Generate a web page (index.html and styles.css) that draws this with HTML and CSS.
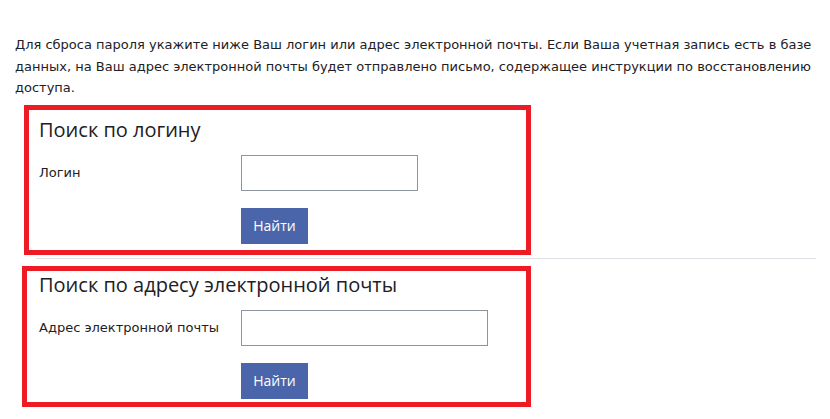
FILE: index.html
```html
<!DOCTYPE html>
<html lang="ru">
<head>
<meta charset="utf-8">
<title>Восстановление пароля</title>
<link rel="stylesheet" href="styles.css">
</head>
<body>
<div class="page">
  <p class="intro">Для сброса пароля укажите ниже Ваш логин или адрес электронной почты. Если Ваша учетная запись есть в базе данных, на Ваш адрес электронной почты будет отправлено письмо, содержащее инструкции по восстановлению доступа.</p>

  <form class="search search-login">
    <h3 class="search-title">Поиск по логину</h3>
    <div class="row">
      <label class="label" for="username">Логин</label>
      <input class="field field-short" id="username" type="text">
    </div>
    <div class="row">
      <span class="label"></span>
      <button class="btn" type="button">Найти</button>
    </div>
  </form>

  <div class="divider"></div>

  <form class="search search-email">
    <h3 class="search-title">Поиск по адресу электронной почты</h3>
    <div class="row">
      <label class="label" for="email">Адрес электронной почты</label>
      <input class="field field-long" id="email" type="text">
    </div>
    <div class="row">
      <span class="label"></span>
      <button class="btn" type="button">Найти</button>
    </div>
  </form>
</div>
</body>
</html>
```

FILE: styles.css
```css
html, body {
  margin: 0;
  padding: 0;
  background: #ffffff;
}

body {
  font-family: "DejaVu Sans", Verdana, sans-serif;
  color: #1d2125;
  font-size: 13px;
}

.page {
  padding: 0 14px 0 15px;
}

.intro {
  margin: 0;
  padding-top: 34px;
  line-height: 21.5px;
  font-size: 13px;
}

.search {
  border: 5px solid #ed1c24;
  padding: 0 0 7px 10px;
  box-sizing: border-box;
  margin: 0;
}

.search-login {
  margin-left: 9px;
  margin-top: 6px;
  width: 507px;
  height: 150px;
  padding-top: 7px;
}

.search-email {
  margin-left: 7px;
  width: 509px;
  height: 141px;
  padding-top: 0;
  padding-left: 12px;
}

.search-title {
  margin: 0;
  font-family: "Open Sans", "DejaVu Sans", sans-serif;
  font-weight: 400;
  font-size: 20px;
  line-height: 26px;
  color: #1d2125;
}

.search-email .search-title {
  margin-top: 1px;
}

.row {
  display: flex;
  align-items: center;
  margin-top: 12px;
}

.row + .row {
  margin-top: 17px;
}

.label {
  width: 202px;
  flex: none;
  font-size: 13px;
}

.field {
  height: 36px;
  box-sizing: border-box;
  border: 1px solid #8f959e;
  border-radius: 0;
  padding: 0 8px;
  margin: 0;
  background: #fff;
}

.field-short {
  width: 177px;
}

.field-long {
  width: 247px;
}

.btn {
  height: 36px;
  width: 67px;
  border: 0;
  border-radius: 0;
  background: #4a65aa;
  color: #ffffff;
  font-family: "Open Sans", "DejaVu Sans", sans-serif;
  font-size: 14px;
  padding: 0;
  margin: 0;
}

.divider {
  margin: 3px 0 7px 21px;
  height: 1px;
  background: #dee2e6;
}
```
